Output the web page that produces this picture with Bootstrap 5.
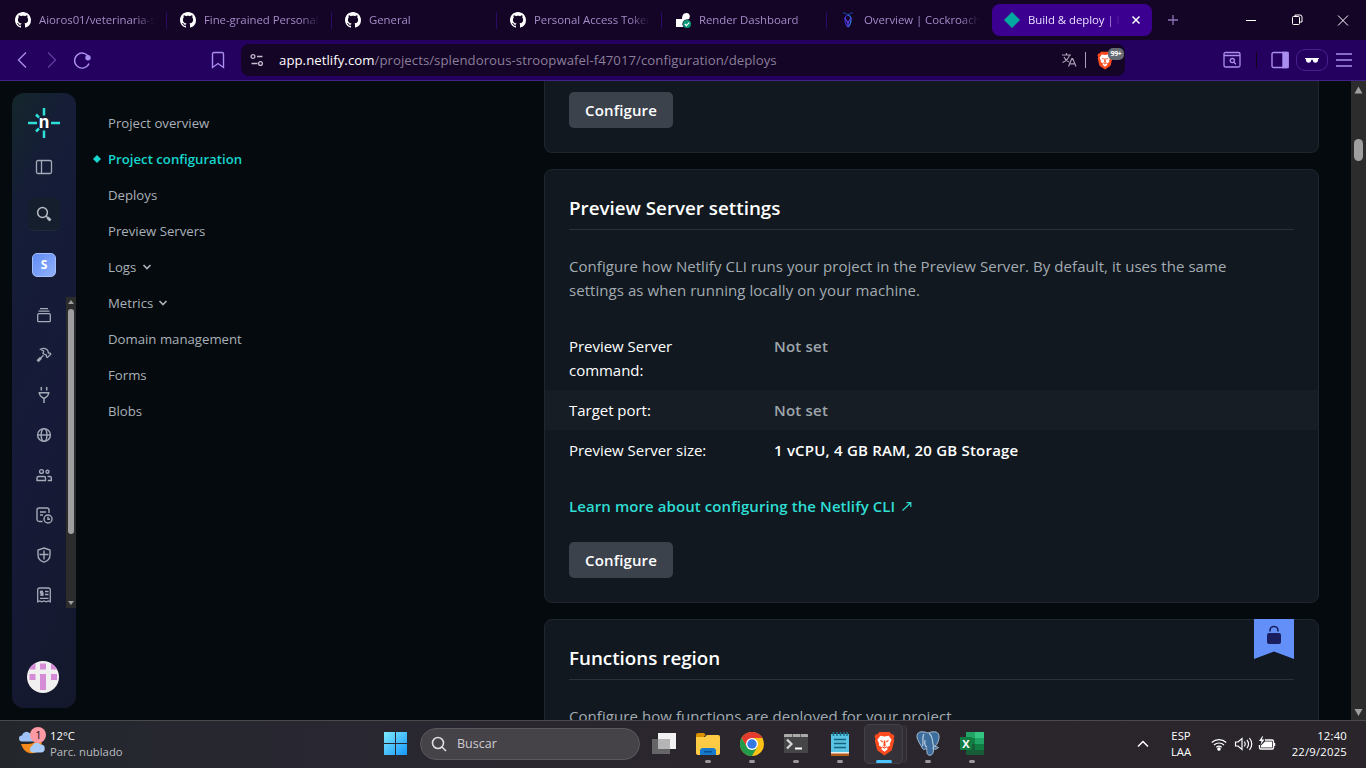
<!DOCTYPE html>
<html lang="en" data-bs-theme="dark">
<head>
<meta charset="utf-8">
<meta name="viewport" content="width=device-width, initial-scale=1">
<title>Build &amp; deploy | Netlify</title>
<link href="https://cdn.jsdelivr.net/npm/bootstrap@5.3.0/dist/css/bootstrap.min.css" rel="stylesheet">
<style>
body{width:1366px;height:768px;overflow:hidden;background:#050a0e;font-family:"Open Sans","Noto Sans",sans-serif;font-size:15px;line-height:24px;color:#fff}
svg{display:block;flex:none}
.ln{fill:none;stroke:currentColor}
.tabstrip{height:40px;background:#140425;font-size:11.4px;letter-spacing:-.04px;color:#a58cc9}
.tab{width:165px;padding-left:15px;height:24px;position:relative}
.tab:not(.bare)::after{content:"";position:absolute;right:-2px;top:4px;width:1px;height:17px;background:#2b0a66}
.tab-title{margin-left:8px;width:117px;overflow:hidden;white-space:nowrap;-webkit-mask-image:linear-gradient(90deg,#000 82%,transparent 99%)}
.tab-on{width:160px;height:32px;margin:0 0 0 2px;padding-left:12px;background:#3b008f;border-radius:8px;color:#e9dfff}
.tab-on .tab-title{width:93px}
.toolbar{height:41px;background:#24005f;border-bottom:1px solid #432389;color:#a98ef0}
.urlbar{width:884px;height:32px;background:#140425;border-radius:8px;margin-left:15px;padding-left:8px;font-size:13.2px;letter-spacing:.05px;color:#8a7f9a}
.shield-count{position:absolute;left:11px;top:-3px;width:16px;height:12px;border-radius:5px;background:#666a73;color:#fff;font-size:7px;line-height:12px;font-weight:700;text-align:center;letter-spacing:-.3px}
.vpn{width:32px;height:22px;border:1px solid #46248b;border-radius:9px;color:#fff}
.page-area{height:639px}
.rail{width:64px;height:615px;margin:12px 0 0 12px;border-radius:12px;background:linear-gradient(115deg,#14262a 0,#151d37 17%,#161a38 55%,#14182b 100%);color:#a3abb8}
.rail-search{width:32px;height:33px;border-radius:6px;background:#151e2c;border-bottom:1px solid #222a3a;color:#b6bcc6;margin-top:22px}
.team{width:24px;height:24px;border-radius:5px;background:linear-gradient(135deg,#618bf5,#90b1fa);border:1px solid #a3bffb;color:#fff;font-size:12px;line-height:22px;font-weight:700;margin-top:22px}
.rail-list{width:64px;height:311px;margin-top:20px}
.rail-icons{width:54px;padding-left:10px;margin-top:-2px}
.rail-icons span{height:40px;flex:none}
.rail-bar{width:10px;background:#2c2c2c}
.rail-thumb{width:6px;height:225px;border-radius:3px;background:#9f9f9f}
.avatar-pic{margin:53px 0 0 -2px}
.sidenav{width:220px;margin-left:32px;padding-top:24px;font-size:13.2px;color:#a9b0b8}
.sidenav a{color:inherit;text-decoration:none;height:36px;line-height:36px;padding:0;display:flex;align-items:center;position:relative;white-space:nowrap}
.sidenav a.here{color:#15d6cd;font-weight:600}
.gem{position:absolute;left:-15px;top:14px}
.content-col{width:775px;margin-left:216px}
.panel{background:#11181f;border:1px solid #1f262d;border-radius:8px}
.panel-a{height:72px;border-top:0;border-radius:0 0 8px 8px;padding:11px 24px}
.panel-b{height:434px;margin-top:16px;padding-top:24px}
.panel-c{height:150px;margin-top:16px;padding-top:24px;position:relative}
.panel h2{font-size:18.8px;font-weight:600;line-height:28px;margin:0 24px 24px;height:36px;border-bottom:1px solid #2a3138}
.panel p{margin:0 24px;color:#a3abb2;letter-spacing:.06px}
.facts{margin-top:24px}
.facts>div{padding:8px 24px}
.facts dt{width:205px;font-weight:400;padding-right:70px;letter-spacing:-.03px}
.facts dt.wide{padding-right:0}
.facts dd{margin:0;font-weight:600;color:#9ea6ae;letter-spacing:.21px}
.shade{background:#171d24}
.morelink{margin:24px 24px;color:#2fded4;font-weight:600;letter-spacing:.08px}
.cfg{width:104px;height:36px;background:#3b424b;color:#fff;border:0;border-radius:5px;font-size:15px;font-weight:600;padding:0;line-height:36px;letter-spacing:.12px}
.ribbon{position:absolute;right:24px;top:-1px}
.mainbar{width:15px;background:#2c2c2c}
.mainbar i{width:9px;height:22px;border-radius:5px;background:#9f9f9f;margin-top:44px}
.taskbar{height:48px;border-top:1px solid #4a4a4c;background:linear-gradient(90deg,#23272c 0,#282731 22%,#2b262d 50%,#29252b 100%);font-size:11.3px;line-height:16px;padding-bottom:2px}
.weather{width:364px;padding-left:18px}
.findbox{width:220px;height:32px;border-radius:16px;background:#454248;border:1px solid #5a575d;margin-left:13px;padding-left:10px;font-size:12.5px;color:#cfcdd0}
.app{width:44px;height:45px;position:relative}
.app.run::after{content:"";position:absolute;left:19px;bottom:3px;width:6px;height:3px;border-radius:2px;background:#9b989c}
.app.front::before{content:"";position:absolute;left:2px;top:3px;width:39px;height:40px;border-radius:5px;background:#35323a;border:1px solid #434048;box-shadow:4px 0 0 -1px #2f2c33,5px 0 0 -1px #413e45}
.app.front::after{left:14px;width:16px;background:#4cc2ff}
.app svg{position:relative}
</style>
</head>
<body>
<svg width="0" height="0" class="position-absolute">
<symbol id="gh" viewBox="0 0 16 16"><path d="M8 0C3.58 0 0 3.58 0 8c0 3.54 2.29 6.53 5.47 7.59.4.07.55-.17.55-.38 0-.19-.01-.82-.01-1.49-2.01.37-2.53-.49-2.69-.94-.09-.23-.48-.94-.82-1.13-.28-.15-.68-.52-.01-.53.63-.01 1.08.58 1.23.82.72 1.21 1.87.87 2.33.66.07-.52.28-.87.51-1.07-1.78-.2-3.64-.89-3.64-3.95 0-.87.31-1.59.82-2.15-.08-.2-.36-1.02.08-2.12 0 0 .67-.21 2.2.82.64-.18 1.32-.27 2-.27s1.36.09 2 .27c1.53-1.04 2.2-.82 2.2-.82.44 1.1.16 1.92.08 2.12.51.56.82 1.27.82 2.15 0 3.07-1.87 3.75-3.65 3.95.29.25.54.73.54 1.48 0 1.07-.01 1.93-.01 2.2 0 .21.15.46.55.38A8.01 8.01 0 0 0 16 8c0-4.42-3.58-8-8-8" fill="#fff"/></symbol>
<symbol id="lion" viewBox="0 0 20 24"><path d="M5 1h10l2 2.300 1.500-.3 1 2.500-.8 2L19.300 9 17 18.500 10 23.500 3 18.500.7 9l.6-1.500-.8-2 1-2.500L3 3.300z" fill="#fb4a1e"/><path d="M6 4.500l4 .7 4-.7 2.800 4-1.700 3.700.3 1.800-3 1.700L13 17.500 10 20l-3-2.500.6-1.800-3-1.700.3-1.800L3.200 8.500z" fill="#fff"/><path d="M5.500 8.500l3 1-.7 1.700zM14.500 8.500l-3 1 .7 1.700zM9.300 9h1.400l.4 5.200L10 15l-1.100-.8zM7.500 14.300l2.500 1.500 2.500-1.500-.5 1.500-2 1.200-2-1.200z" fill="#fb4a1e"/></symbol>
</svg>

<header class="tabstrip d-flex align-items-center">
  <div class="tab d-flex align-items-center"><svg width="16" height="16"><use href="#gh"/></svg><div class="tab-title">Aioros01/veterinaria-s</div></div>
  <div class="tab d-flex align-items-center"><svg width="16" height="16"><use href="#gh"/></svg><div class="tab-title">Fine-grained Personal</div></div>
  <div class="tab d-flex align-items-center"><svg width="16" height="16"><use href="#gh"/></svg><div class="tab-title">General</div></div>
  <div class="tab d-flex align-items-center"><svg width="16" height="16"><use href="#gh"/></svg><div class="tab-title">Personal Access Token</div></div>
  <div class="tab d-flex align-items-center"><svg width="16" height="16" viewBox="0 0 16 16"><path d="M1 7h6c.2-3 .8-6 4.500-6 2.400 0 3.500 1.800 3.300 3.700C14.600 7 13 8 11 8v7H1z" fill="#fff"/><circle cx="12" cy="12" r="4.600" fill="#140425"/><circle cx="12" cy="12" r="4" fill="#0a9b79"/><path d="M9.800 12l1.600 1.600 2.800-3" stroke="#fff" stroke-width="1.200" fill="none"/></svg><div class="tab-title">Render Dashboard</div></div>
  <div class="tab bare d-flex align-items-center"><svg width="16" height="16" viewBox="0 0 16 16"><g fill="none" stroke-width="1.200"><path d="M3 .8c3 0 3.500 1 5 2.200C9.500 1.800 10 .8 13 .8" stroke="#183d92"/><path d="M8 3C4 4 4 11 8 15" stroke="#3b2fc4"/><path d="M8 15c4-4 4-11 0-12" stroke="#2877d8"/><path d="M4.800 5.500C5 8 8 8.500 8 12V15M11.200 5.500C11 8 8 8.500 8 12" stroke="#5b3ee8"/></g></svg><div class="tab-title">Overview | Cockroach</div></div>
  <div class="tab tab-on bare d-flex align-items-center"><svg width="16" height="16" viewBox="0 0 16 16"><path d="M8 0l8 8-8 8-8-8z" fill="#05a8a0"/></svg><div class="tab-title">Build &amp; deploy | P</div>
    <svg class="ms-2" width="14" height="14" viewBox="0 0 14 14"><path d="M3.500 3.500l7 7m0-7l-7 7" stroke="#fff" stroke-width="1.500"/></svg></div>
  <svg style="margin-left:15px" width="12" height="12" viewBox="0 0 12 12"><path d="M6 1v10M1 6h10" stroke="#8e76b8" stroke-width="1.300"/></svg>
  <svg class="ln text-white" style="margin-left:67px" width="108" height="14" viewBox="0 0 108 14"><path d="M0 7.500h10M46.500 4.500q0-1 1-1h5q1 0 1 1v6q0 1-1 1h-5q-1 0-1-1zM49 3.500v-1.500h5q2 0 2 2v5h-2M92 2.500l10 10m0-10l-10 10"/></svg>
</header>

<nav class="toolbar d-flex align-items-center">
  <svg class="ln" style="margin-left:14px" width="82" height="20" viewBox="0 0 82 20" stroke-width="1.400"><path d="M12 2.500L4.500 10l7.500 7.500"/><path d="M34 2.500l7.500 7.500-7.500 7.500" stroke="#5e3ba0"/><path d="M75.300 8.500a7.500 7.500 0 1 0 -.3 5"/><circle cx="74" cy="7.800" r="2" fill="currentColor"/></svg>
  <svg class="ln" style="margin-left:114px" width="16" height="18" viewBox="0 0 16 18" stroke-width="1.400"><path d="M4 1.500h8q1.500 0 1.500 1.500v13.500L8 12.500l-5.500 4V3q0-1.500 1.500-1.500z"/></svg>
  <div class="urlbar d-flex align-items-center">
    <svg class="ln" width="16" height="16" viewBox="0 0 16 16" style="color:#c5bdd0" stroke-width="1.300"><circle cx="4" cy="4.500" r="1.900"/><circle cx="11.500" cy="11.500" r="1.900"/><path d="M8 4.500h5.500M2.500 11.500h6"/></svg>
    <div style="margin-left:14px;width:774px"><span class="text-white">app.netlify.com</span>/projects/splendorous-stroopwafel-f47017/configuration/deploys</div>
    <svg class="ln" width="16" height="16" viewBox="0 0 16 16" style="color:#a99fb5;margin-left:8px" stroke-width="1.200"><path d="M1 3h9M5.500 1v2M8.500 3c-.7 3.500-3.500 6-7 7.500M3 5c1 2.500 2.500 4 5 5M7.500 14.500l3.300-8h.9l3.300 8M8.800 11.800h4.900"/></svg>
    <div style="width:1px;height:16px;background:#aaa1b8;margin-left:8px"></div>
    <div class="position-relative" style="margin-left:11px"><svg width="16" height="19"><use href="#lion"/></svg><span class="shield-count">99+</span></div>
  </div>
  <svg class="ln" style="margin-left:98px" width="18" height="18" viewBox="0 0 18 18" stroke-width="1.300"><rect x="1" y="1.500" width="16" height="14.500" rx="1.500"/><path d="M1 4.500h16M10.800 11.300l2.200 2"/><circle cx="9.300" cy="9.600" r="2.100"/></svg>
  <div style="width:1px;height:16px;background:#12031f;margin-left:15px"></div>
  <svg class="ln" style="margin-left:14px" width="18" height="18" viewBox="0 0 18 18" stroke-width="1.400"><rect x="1" y="1.500" width="16" height="15" rx="1.500"/><path d="M12 1.500h5v15h-5z" fill="currentColor"/></svg>
  <div class="vpn d-flex align-items-center justify-content-center" style="margin-left:7px"><svg width="14" height="7" viewBox="0 0 16 8"><path d="M0 1h16v1l-1 .5c-.2 3-1.300 4-3 4-2 0-3-1.500-3.200-3.500H7.200C7 5 6 6.500 4 6.500c-1.700 0-2.800-1-3-4L0 2z" fill="#fff"/></svg></div>
  <svg class="ln" style="margin-left:8px" width="16" height="16" viewBox="0 0 16 16" stroke-width="1.500"><path d="M0 2h16M0 8h16M0 14h16"/></svg>
</nav>

<main class="page-area d-flex overflow-hidden">
  <aside class="rail d-flex flex-column align-items-center">
    <svg style="margin-top:14px" width="32" height="32" viewBox="0 0 32 32"><path d="M16 1v7.500M16 23.500v7.500M0 16h9M23 16h9M8 7.500l3 3M8 24.500l3-3" stroke="#2fe0d8" stroke-width="2.500"/><text x="16" y="21" text-anchor="middle" font-family="Inter" font-size="17" font-weight="700" fill="#fff">n</text></svg>
    <svg class="ln" style="margin-top:19px" width="18" height="18" viewBox="0 0 18 18" stroke-width="1.300"><rect x="1.500" y="2.500" width="15" height="13" rx="1.500"/><path d="M6.500 3v12"/></svg>
    <div class="rail-search d-flex align-items-center justify-content-center"><svg class="ln" width="16" height="16" viewBox="0 0 16 16" stroke-width="1.500"><circle cx="6.500" cy="6.500" r="4.900"/><path d="M10 10l1.800 1.800"/><path d="M11.500 11.500l3 3" stroke-width="2.800"/></svg></div>
    <div class="team text-center">S</div>
    <div class="rail-list d-flex">
      <div class="rail-icons d-flex flex-column">
        <span class="d-flex align-items-center justify-content-center"><svg class="ln" width="16" height="16" viewBox="0 0 16 16" stroke-width="1.300"><rect x="1.700" y="6.700" width="12.600" height="8" rx="1"/><path d="M2.500 4.200h11M4 1.700h8"/></svg></span>
        <span class="d-flex align-items-center justify-content-center"><svg class="ln" width="16" height="16" viewBox="0 0 16 16" stroke-width="1.300"><path d="M4.500 2.200C8 .2 11 1.800 12 4l.4 2.200h1.800l.6 1-3.400 3.300-1-.7V8.200L7 6.500 7.700 4z"/><path d="M7.500 8.200L4.300 11.400"/><path d="M5 10.700l-3.500 3.500" stroke-width="2.800"/></svg></span>
        <span class="d-flex align-items-center justify-content-center"><svg class="ln" width="16" height="16" viewBox="0 0 16 16" stroke-width="1.500"><path d="M5.300 0v3.500M10.700 0v3.500M2.500 5.700h11M3.500 5.700c0 3 1 4 4.500 5.800 3.500-1.800 4.500-2.800 4.500-5.800M8 11.500V16"/></svg></span>
        <span class="d-flex align-items-center justify-content-center"><svg class="ln" width="16" height="16" viewBox="0 0 16 16" stroke-width="1.400"><circle cx="8" cy="8" r="6.400"/><ellipse cx="8" cy="8" rx="2.900" ry="6.400"/><path d="M1.600 8h12.800"/></svg></span>
        <span class="d-flex align-items-center justify-content-center"><svg class="ln" width="16" height="16" viewBox="0 0 16 16" stroke-width="1.400"><circle cx="5.500" cy="4.500" r="1.900"/><circle cx="11.500" cy="4.800" r="1.500"/><path d="M1 13.500v-2.500q0-1.500 1.500-1.500h5.500q1.500 0 1.500 1.500v2.500zM11.500 9.500h2.500q1.300 0 1.300 1.500v2.500h-3.500"/></svg></span>
        <span class="d-flex align-items-center justify-content-center"><svg class="ln" width="17" height="17" viewBox="0 0 17 17" stroke-width="1.400"><path d="M6.500 14.500h-3q-2.500 0-2.500-2.500V3q0-2 2-2h8q2 0 2 2v3M4 5h6M4 8h3"/><circle cx="12" cy="12" r="4"/><path d="M12 9.800v2.400h2"/></svg></span>
        <span class="d-flex align-items-center justify-content-center"><svg class="ln" width="16" height="16" viewBox="0 0 16 16" stroke-width="1.400"><path d="M8 1l6 2v5c0 3.500-2.500 6-6 7.200C4.500 14 2 11.500 2 8V3zM8 3.500v9M3.500 7.500h9"/></svg></span>
        <span class="d-flex align-items-center justify-content-center"><svg class="ln" width="16" height="16" viewBox="0 0 16 16" stroke-width="1.300"><path d="M1.700 14.800V3q0-2 2-2h8.600q2 0 2 2v11.800l-2-.9-2 .9-2.300-.9-2.200.9-2-.9zM9 4.500h3.500M9 7.500h3.500M4 11.300h8.500M7 4.300H4.500v1.700H7v2H4.200M5.700 3.500v5.500"/></svg></span>
      </div>
      <div class="rail-bar d-flex flex-column align-items-center"><svg width="10" height="12" viewBox="0 0 10 12"><path d="M2 7h6L5 3z" fill="#9f9f9f"/></svg><div class="rail-thumb"></div><svg class="mt-auto" width="10" height="10" viewBox="0 0 10 10"><path d="M2 3h6L5 7z" fill="#9f9f9f"/></svg></div>
    </div>
    <svg class="avatar-pic" width="32" height="32" viewBox="0 0 32 32"><defs><clipPath id="rd"><circle cx="16" cy="16" r="16"/></clipPath></defs><g clip-path="url(#rd)"><path d="M0 0h32v32H0z" fill="#f0f0f0"/><path d="M2.500 2.500h6v6h-6zM13 2.500h6v6h-6zM24 2.500h6v6h-6zM2.500 13h6v6h-6zM24 13h6v6h-6zM13 13h6v16h-6z" fill="#d68bd6"/></g></svg>
  </aside>

  <nav class="sidenav nav flex-column flex-nowrap">
    <a href="#">Project overview</a>
    <a href="#" class="here"><svg class="gem" width="8" height="8" viewBox="0 0 8 8"><path d="M4 0l4 4-4 4-4-4z" fill="#15d6cd"/></svg>Project configuration</a>
    <a href="#">Deploys</a>
    <a href="#">Preview Servers</a>
    <a href="#">Logs<svg class="ln" style="margin-left:6px" width="10" height="8" viewBox="0 0 10 8" stroke-width="1.700"><path d="M1.500 2L5 5.500 8.500 2"/></svg></a>
    <a href="#">Metrics<svg class="ln" style="margin-left:5px" width="10" height="8" viewBox="0 0 10 8" stroke-width="1.700"><path d="M1.500 2L5 5.500 8.500 2"/></svg></a>
    <a href="#">Domain management</a>
    <a href="#">Forms</a>
    <a href="#">Blobs</a>
  </nav>

  <section class="content-col">
    <div class="panel panel-a"><button class="cfg">Configure</button></div>
    <div class="panel panel-b">
      <h2>Preview Server settings</h2>
      <p class="text-nowrap">Configure how Netlify CLI runs your project in the Preview Server. By default, it uses the same<br>settings as when running locally on your machine.</p>
      <dl class="facts mb-0">
        <div class="d-flex"><dt>Preview Server command:</dt><dd>Not set</dd></div>
        <div class="d-flex shade"><dt>Target port:</dt><dd>Not set</dd></div>
        <div class="d-flex"><dt class="wide">Preview Server size:</dt><dd class="text-white">1 vCPU, 4 GB RAM, 20 GB Storage</dd></div>
      </dl>
      <div class="morelink d-flex align-items-center"><span class="text-nowrap">Learn more about configuring the Netlify CLI</span><svg class="ln" style="margin-left:7px" width="10" height="10" viewBox="0 0 10 10" stroke-width="1.200"><path d="M.5 9.500L8.500 2M4.500 1.700h4.300V6"/></svg></div>
      <button class="cfg ms-4">Configure</button>
    </div>
    <div class="panel panel-c">
      <svg class="ribbon" width="40" height="40" viewBox="0 0 40 40"><path d="M0 0h40v40L20 32.500 0 40z" fill="#6290f8"/><rect x="13" y="14" width="14" height="11" rx="2" fill="#1b1e5e"/><path d="M16 12.500v-1a4 4 0 0 1 8 0v1" fill="none" stroke="#1b1e5e" stroke-width="1.600"/></svg>
      <h2>Functions region</h2>
      <p class="text-nowrap">Configure how functions are deployed for your project.</p>
    </div>
  </section>

  <div class="mainbar d-flex flex-column align-items-center ms-auto"><svg width="15" height="14" viewBox="0 0 15 14"><path d="M3.500 12.500h8L7.500 5.500z" fill="#9f9f9f"/></svg><i></i><svg class="mt-auto" width="15" height="14" viewBox="0 0 15 14"><path d="M3.500 3h8L7.500 10z" fill="#9f9f9f"/></svg></div>
</main>

<footer class="taskbar d-flex align-items-center position-relative">
  <div class="weather d-flex align-items-center">
    <svg style="margin-top:-5px" width="30" height="30" viewBox="0 0 30 30"><path d="M3 18h7c6 0 9-3 9-8 5 3 6 8 3 13-4 6-15 7-19-5z" fill="#f58a1b"/><path d="M4 15.500a3 3 0 0 1 0-6 4.500 4.500 0 0 1 8-2 4 4 0 0 1 3 8z" fill="#9fc1f5"/><path d="M14 26.500a3.500 3.500 0 0 1 0-6.500 5 5 0 0 1 8.500-1.500 4 4 0 0 1 .5 8z" fill="#a9cbf8"/><circle cx="20" cy="9" r="8" fill="#ff99a4"/><text x="20.500" y="13" font-size="11" text-anchor="middle" fill="#111">1</text></svg>
    <div style="margin-left:2px"><div>12°C</div><div style="color:#bdbdc0">Parc. nublado</div></div>
  </div>
  <svg style="margin-left:20px" width="23" height="23" viewBox="0 0 23 23"><defs><linearGradient id="w" x1="0" y1="0" x2="1" y2="1"><stop stop-color="#7deafd"/><stop offset="1" stop-color="#1596fb"/></linearGradient></defs><path d="M0 0h11v11H0zM12 0h11v11H12zM0 12h11v11H0zM12 12h11v11H12z" fill="url(#w)"/></svg>
  <div class="findbox d-flex align-items-center"><svg class="ln" width="16" height="16" viewBox="0 0 16 16" stroke-width="1.600" style="color:#dedde0"><circle cx="7" cy="7" r="5.500"/><path d="M11 11l4 4"/></svg><span style="margin-left:10px">Buscar</span></div>
  <div class="d-flex" style="margin-left:2px">
    <div class="app d-flex align-items-center justify-content-center"><svg width="24" height="24" viewBox="0 0 24 24"><path d="M6 1h18v16H6z" fill="#f1f1f1"/><path d="M0 7h18v15H0z" fill="#656568" /><path d="M6 7h12v10H6z" fill="#b5b5b7"/></svg></div>
    <div class="app run d-flex align-items-center justify-content-center"><svg width="26" height="24" viewBox="0 0 26 24"><path d="M1 3q0-2 2-2h6l2 2.500h-1L8 6H1z" fill="#d99100"/><path d="M1 5h9l2-2h11q2 0 2 2v16q0 2-2 2H3q-2 0-2-2z" fill="#ffcb45"/><path d="M5 23v-4q0-3 3-3h10q3 0 3 3v4z" fill="#1779cc"/><path d="M9 19h8v1.500H9z" fill="#0d4e92"/></svg></div>
    <div class="app run d-flex align-items-center justify-content-center"><svg width="24" height="24" viewBox="0 0 24 24"><circle cx="12" cy="12" r="12" fill="#fbc116"/><path d="M1.600 6A12 12 0 0 1 22.400 6H12L6.800 15z" fill="#e33b2e"/><path d="M1.600 6A12 12 0 0 0 12 24l5.200-9L12 12 6.800 15z" fill="#229a4b"/><circle cx="12" cy="12" r="6" fill="#fff"/><circle cx="12" cy="12" r="4.700" fill="#3478e6"/></svg></div>
    <div class="app run d-flex align-items-center justify-content-center"><svg width="24" height="20" viewBox="0 0 24 20"><path d="M0 1q0-1 1-1h22q1 0 1 1v17q0 1-1 1H1q-1 0-1-1z" fill="#454548"/><path d="M0 1q0-1 1-1h22q1 0 1 1v2H0z" fill="#aaa"/><path d="M16 0h1v3h-1zM8 0h1v3H8z" fill="#666"/><path d="M3 5.500l4.500 4.500L3 14.500" stroke="#d5d5d5" stroke-width="2.200" fill="none"/><path d="M11 14.500h7" stroke="#fff" stroke-width="2"/></svg></div>
    <div class="app run d-flex align-items-center justify-content-center"><svg width="20" height="26" viewBox="0 0 20 26"><path d="M1 3h18v19H1z" fill="#58c3e2"/><path d="M1 21h18v4H1z" fill="#b35c1c"/><path d="M1 21h18v1.500H1z" fill="#eee"/><path d="M3.500 1v4M7 1v4M10.500 1v4M14 1v4M17 1v4" stroke="#1a7392" stroke-width="1.500"/><path d="M4 8.500h12M4 12.500h12M4 16.500h12" stroke="#17627e" stroke-width="1.700"/></svg></div>
    <div class="app run front d-flex align-items-center justify-content-center"><svg width="21" height="25"><use href="#lion"/></svg></div>
    <div class="app run d-flex align-items-center justify-content-center"><svg width="24" height="25" viewBox="0 0 24 25"><path d="M12 2C16 .5 22-.5 23 4.500c.5 4-1.500 8.500-4 11l3.500.8c-1 1.800-3 2.200-5 1.700-.2 2.500 0 6-3.500 6.200-3.800.2-3-4-3.300-7.500-1.700 2.600-3.700 2.300-5-.7C3.500 12 .5 7.500 1 4.500 1.800-.5 8 .5 12 2z" fill="#3c6d9c" stroke="#a7bdd2"/><path d="M8 3C5.500 6 8 11 6.500 15M13 2.500c4 2 3 8 4.500 12.500M11 16c-3-1-2.500-4-2-7M17 18c0-2 1-3 2.500-3" fill="none" stroke="#bfd0df" stroke-width="1.100"/></svg></div>
    <div class="app run d-flex align-items-center justify-content-center"><svg width="24" height="23" viewBox="0 0 24 23"><path d="M6 1q0-1 1-1h16q1 0 1 1v21q0 1-1 1H7q-1 0-1-1z" fill="#185c37"/><path d="M6 0h9v6H6z" fill="#21a366"/><path d="M15 0h9v6h-9z" fill="#33c481"/><path d="M6 6h9v6H6z" fill="#107c41"/><path d="M15 6h9v6h-9z" fill="#21a366"/><path d="M15 12h9v6h-9z" fill="#107c41"/><path d="M0 5h12v13H0z" fill="#107c41"/><text x="6" y="15.500" font-size="11" font-weight="700" text-anchor="middle" fill="#fff">X</text></svg></div>
  </div>
  <svg class="ln" style="margin-left:143px" width="12" height="8" viewBox="0 0 12 8" stroke-width="1.500"><path d="M1 6.500L6 1.500l5 5"/></svg>
  <div class="text-center" style="margin-left:20px;width:24px"><div>ESP</div><div>LAA</div></div>
  <svg class="ln" style="margin-left:18px" width="65" height="16" viewBox="0 0 65 16" stroke-width="1.200"><path d="M.8 6.500a10.500 10.500 0 0 1 14.400 0M3 9a7.300 7.300 0 0 1 10 0M5.300 11.300a4 4 0 0 1 5.400 0"/><circle cx="8" cy="13" r="1.200" fill="currentColor"/><path d="M24.500 6h2.500l4-3.500v11L27 10h-2.500zM33.500 5.500q1.500 2.500 0 5M36 3.800q3 4.200 0 8.400M38.500 2q4.500 6 0 12"/><path d="M54 4h7q1.500 0 1.500 1.500v6q0 1.500-1.500 1.500H50q-1.500 0-1.500-1.500V9M63.500 7v3" stroke-width="1.400"/><path d="M54 5.500h7v6H50V9.500zM51.500 0l-3.500 5h2.500l-1 4 4-5.500h-2.500l1-3.500z" fill="currentColor" stroke="none"/></svg>
  <div class="text-end text-nowrap" style="margin-left:11px;width:60px;letter-spacing:.2px"><div>12:40</div><div>22/9/2025</div></div>
</footer>
<script src="https://cdn.jsdelivr.net/npm/bootstrap@5.3.0/dist/js/bootstrap.bundle.min.js"></script>
</body>
</html>
